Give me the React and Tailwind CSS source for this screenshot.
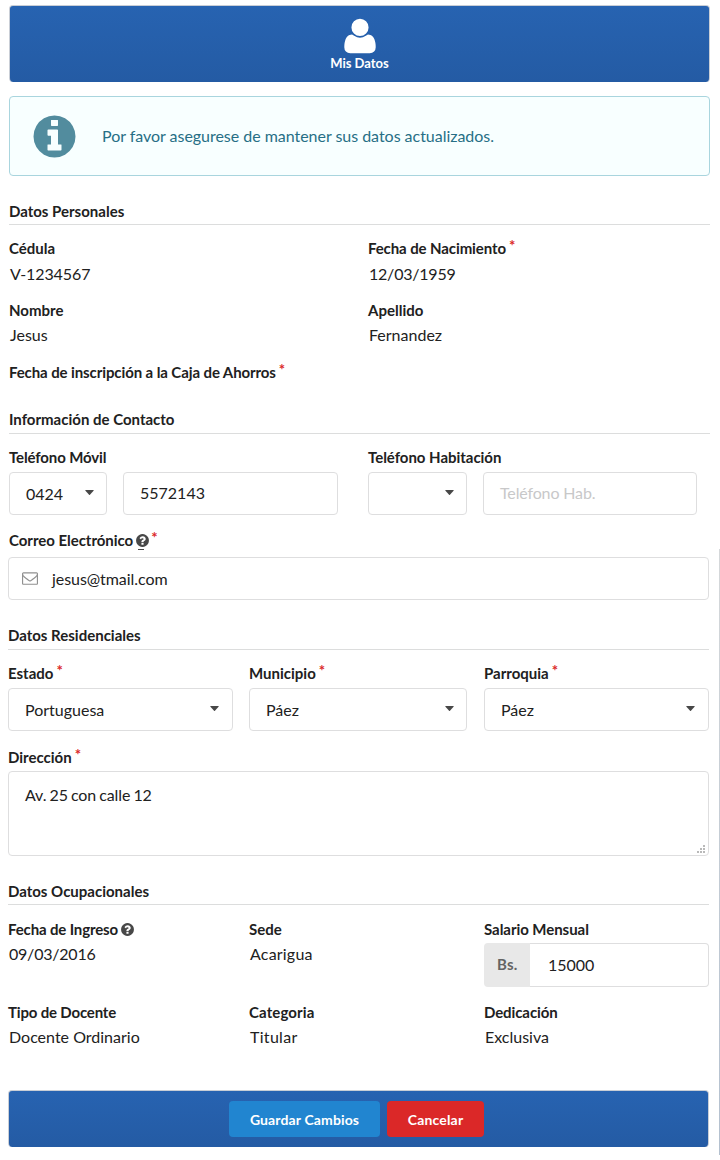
import React from "react";

const CIRCLE =
  "M1664 896q0 209-103 385.5t-279.5 279.5-385.5 103-385.5-103-279.5-279.5-103-385.5 103-385.5 279.5-279.5 385.5-103 385.5 103 279.5 279.5 103 385.5z";
const INFO =
  "M1152 1376v-160q0-14-9-23t-23-9h-96v-512q0-14-9-23t-23-9h-320q-14 0-23 9t-9 23v160q0 14 9 23t23 9h96v320h-96q-14 0-23 9t-9 23v160q0 14 9 23t23 9h448q14 0 23-9t9-23zm-128-896v-160q0-14-9-23t-23-9h-192q-14 0-23 9t-9 23v160q0 14 9 23t23 9h192q14 0 23-9t9-23z";
const QUESTION =
  "M1024 1376v-192q0-14-9-23t-23-9h-192q-14 0-23 9t-9 23v192q0 14 9 23t23 9h192q14 0 23-9t9-23zm256-672q0-88-55.5-163t-138.5-116-170-41q-243 0-371 213-15 24 8 42l132 100q7 6 19 6 16 0 25-12 53-68 86-92 34-24 86-24 48 0 85.5 26t37.5 59q0 38-20 61t-68 45q-63 28-115.5 86.5t-52.5 125.5v36q0 14 9 23t23 9h192q14 0 23-9t9-23q0-19 21.5-49.5t54.5-49.5q32-18 49-28.5t46-35 44.5-48 28-60.5 12.5-81z";
const USER =
  "M1600 1405q0 120-73 189.5t-194 69.5h-874q-121 0-194-69.5t-73-189.5q0-53 3.5-103.5t14-109 26.5-108.5 43-97.5 62-81 85.5-53.5 111.5-20q9 0 42 21.5t74.5 48 108 48 133.5 21.5 133.5-21.5 108-48 74.5-48 42-21.5q61 0 111.5 20t85.5 53.5 62 81 43 97.5 26.5 108.5 14 109 3.5 103.5zm-320-893q0 159-112.5 271.5t-271.5 112.5-271.5-112.5-112.5-271.5 112.5-271.5 271.5-112.5 271.5 112.5 112.5 271.5z";
const ENVELOPE =
  "M1664 1504v-768q-32 36-69 66-268 206-426 338-51 43-83 67t-86.5 48.5-102.5 24.5h-2q-48 0-102.5-24.5t-86.5-48.5-83-67q-158-132-426-338-37-30-69-66v768q0 13 9.5 22.5t22.5 9.5h1472q13 0 22.5-9.5t9.5-22.5zm0-1051v-24.5l-.5-13-3-12.5-5.5-9-9-7.5-14-2.5h-1472q-13 0-22.5 9.5t-9.5 22.5q0 168 147 284 193 152 401 317 6 5 35 29.5t46 37.5 44.5 31.5 50.5 27.5 43 9h2q20 0 43-9t50.5-27.5 44.5-31.5 46-37.5 35-29.5q208-165 401-317 54-43 100.5-115.5t46.5-131.5zm128-37v1088q0 66-47 113t-113 47h-1472q-66 0-113-47t-47-113v-1088q0-66 47-113t113-47h1472q66 0 113 47t47 113z";

function Icon({ path, className }) {
  return (
    <svg viewBox="0 0 1792 1792" className={className} fill="currentColor" fillRule="evenodd">
      <path d={path} />
    </svg>
  );
}

function Help({ underlined }) {
  return (
    <span className="relative ml-[2px] mt-[3px] block h-[15px] w-[15px] text-[#484848]">
      <Icon path={CIRCLE + QUESTION} className="block h-[15px] w-[15px]" />
      {underlined && <span className="absolute left-[3px] top-[16px] h-px w-[6px] bg-[#484848]" />}
    </span>
  );
}

function Label({ children, required, help, underlined, className = "" }) {
  return (
    <div className="flex h-5 items-start whitespace-nowrap text-[15px] font-bold leading-5">
      <span className={className}>{children}</span>
      {help && <Help underlined={underlined} />}
      {required && (
        <span className={"-mt-[3px] leading-5 text-[#db2828] " + (help ? "ml-[1px]" : "ml-[3px]")}>*</span>
      )}
    </div>
  );
}

function Value({ children, className = "" }) {
  return <div className={"h-5 whitespace-nowrap pl-px text-[16px] leading-5 " + className}>{children}</div>;
}

function Heading({ children, className }) {
  return <h2 className={"border-b border-[#dcdddd] text-[15px] font-bold leading-5 " + className}>{children}</h2>;
}

function Select({ children, className }) {
  return (
    <div
      className={
        "flex h-[43px] justify-between rounded border border-[#dededf] bg-white pl-4 pt-[11px] text-[16px] leading-5 " +
        className
      }
    >
      <span>{children}</span>
      <svg viewBox="0 0 10 5" preserveAspectRatio="none" className="mt-[6px] h-[5px] w-[9px]" fill="#484848">
        <path d="M.6 0h8.8q.5.3.1.8L5.5 4.7q-.5.4-1 0L.5.8Q.1.3.6 0z" />
      </svg>
    </div>
  );
}

function Input({ children, className = "" }) {
  return (
    <div className={"h-[43px] rounded border border-[#dededf] bg-white text-[16px] leading-5 " + className}>
      {children}
    </div>
  );
}

const barClass =
  "border border-b-0 border-[#c9ced6] bg-linear-to-b from-[#2763b1] to-[#245ba4] rounded";

export default function App() {
  return (
    <div className="flex h-[1160px] w-[720px] justify-between overflow-hidden bg-white font-['Lato',sans-serif] text-[#212121]">
      <main className="w-[710px]">
        <div className="w-[710px] pl-[9px]">
          <header className={"mt-[5px] flex h-[77px] w-[701px] flex-col items-center text-white " + barClass}>
            <Icon path={USER} className="mt-[10px] h-10 w-10 shrink-0" />
            <span className="-mt-px text-[13px] font-bold leading-4">Mis Datos</span>
          </header>

          <div className="mt-[14px] flex h-20 items-center rounded border border-[#a9d5de] bg-[#f8ffff] text-[#276f86]">
            <Icon path={CIRCLE + INFO} className="ml-[19.5px] h-[49px] w-[49px] text-[#528c9e]" />
            <span className="ml-[23.5px] text-[16px] leading-5 tracking-[-0.03px]">
              Por favor asegurese de mantener sus datos actualizados.
            </span>
          </div>

          <Heading className="mt-[25px] h-6">Datos Personales</Heading>
          <div className="mt-[13px] grid grid-cols-[359px_1fr]">
            <div>
              <Label>Cédula</Label>
              <Value className="mt-[6px] tracking-[-0.1px]">V-1234567</Value>
            </div>
            <div>
              <Label required className="tracking-[-0.1px]">Fecha de Nacimiento</Label>
              <Value className="mt-[6px] tracking-[-0.22px]">12/03/1959</Value>
            </div>
          </div>
          <div className="mt-4 grid grid-cols-[359px_1fr]">
            <div>
              <Label>Nombre</Label>
              <Value className="mt-[5px]">Jesus</Value>
            </div>
            <div>
              <Label>Apellido</Label>
              <Value className="mt-[5px]">Fernandez</Value>
            </div>
          </div>
          <div className="mt-[17px]">
            <Label required className="tracking-[-0.1px]">
              Fecha de inscripción a la Caja de Ahorros
            </Label>
          </div>

          <Heading className="mt-[27px] h-[25px]">Información de Contacto</Heading>
          <div className="mt-[13px] grid grid-cols-[359px_1fr]">
            <div>
              <Label className="tracking-[-0.13px]">Teléfono Móvil</Label>
              <div className="mt-[5px] flex gap-4">
                <Select className="w-[98px] pr-3">0424</Select>
                <Input className="w-[215px] pl-4 pt-[10px]">5572143</Input>
              </div>
            </div>
            <div>
              <Label className="tracking-[-0.03px]">Teléfono Habitación</Label>
              <div className="mt-[5px] flex gap-4">
                <Select className="w-[99px] pr-3" />
                <Input className="w-[214px] pl-4 pt-[10px] tracking-[-0.15px] text-[#c8c8c9]">Teléfono Hab.</Input>
              </div>
            </div>
          </div>
          <div className="mt-[15px]">
            <Label required help underlined className="tracking-[-0.03px]">
              Correo Electrónico
            </Label>
          </div>
        </div>

        <div className="w-[709px] pl-2">
          <Input className="mt-[7px] flex pl-[13px] pt-[11px]">
            <Icon path={ENVELOPE} className="mt-px h-4 w-4 text-[#909090]" />
            <span className="ml-[14px] tracking-[-0.06px]">jesus@tmail.com</span>
          </Input>

          <Heading className="mt-[25px] h-[25px]">Datos Residenciales</Heading>
          <div className="mt-[13px] grid grid-cols-[225px_218px_225px] gap-x-4">
            <div>
              <Label required>Estado</Label>
              <Select className="mt-[5px] pr-[13px]">Portuguesa</Select>
            </div>
            <div>
              <Label required>Municipio</Label>
              <Select className="mt-[5px] pr-3">Páez</Select>
            </div>
            <div className="-mr-px ml-px">
              <Label required>Parroquia</Label>
              <Select className="mt-[5px] pr-[13px]">Páez</Select>
            </div>
          </div>
          <div className="mt-4">
            <Label required>Dirección</Label>
          </div>
          <div className="mt-1 flex h-[85px] justify-between rounded border border-[#dededf] pl-4 pt-[13px] text-[16px] leading-5">
            <span className="tracking-[-0.1px] [word-spacing:-0.9px]">Av. 25 con calle 12</span>
            <svg viewBox="0 0 8 8" className="mb-[2px] mr-[3px] h-2 w-2 self-end" fill="#b9b9b9">
              <path d="M6 0h2v2H6zM3 3h2v2H3zM6 3h2v2H6zM0 6h2v2H0zM3 6h2v2H3zM6 6h2v2H6z" />
            </svg>
          </div>

          <Heading className="mt-[25px] h-6">Datos Ocupacionales</Heading>
          <div className="mt-[14px] grid h-[68px] grid-cols-[241px_235px_1fr]">
            <div>
              <Label help className="tracking-[-0.14px]">Fecha de Ingreso</Label>
              <Value className="mt-[5px] tracking-[-0.22px]">09/03/2016</Value>
            </div>
            <div>
              <Label>Sede</Label>
              <Value className="mt-[5px] tracking-[0.2px]">Acarigua</Value>
            </div>
            <div>
              <Label className="tracking-[-0.05px]">Salario Mensual</Label>
              <div className="mt-1 flex h-11 text-[16px] leading-5">
                <div className="w-[46px] rounded-l bg-[#e8e8e8] pl-[13px] pt-[11px] text-[15px] font-bold tracking-[0.3px] text-[#646464]">
                  Bs.
                </div>
                <div className="flex-1 rounded-r border border-l-0 border-[#dededf] pl-[18px] pt-[11px]">15000</div>
              </div>
            </div>
          </div>
          <div className="mt-[15px] grid grid-cols-[241px_235px_1fr]">
            <div>
              <Label className="tracking-[-0.17px]">Tipo de Docente</Label>
              <Value className="mt-[5px]">Docente Ordinario</Value>
            </div>
            <div>
              <Label className="tracking-[0.12px]">Categoria</Label>
              <Value className="mt-[5px] tracking-[0.3px]">Titular</Value>
            </div>
            <div>
              <Label className="tracking-[-0.1px]">Dedicación</Label>
              <Value className="mt-[5px]">Exclusiva</Value>
            </div>
          </div>

          <footer className={"mt-[43px] flex h-[57px] items-start gap-[7px] pl-[220px] pt-[10px] " + barClass}>
            <button className="h-9 w-[151px] rounded bg-[#2185d0] pt-[2px] text-[14px] font-bold leading-5 tracking-[0.13px] text-white">
              Guardar Cambios
            </button>
            <button className="h-9 w-[97px] rounded bg-[#db2828] pt-[2px] text-[14px] font-bold leading-5 tracking-[0.18px] text-white">
              Cancelar
            </button>
          </footer>
        </div>
      </main>
      <div className="mt-[549px] h-[606px] w-px bg-linear-to-b from-[#d5d8da] to-[#b3c0cf]" />
    </div>
  );
}
